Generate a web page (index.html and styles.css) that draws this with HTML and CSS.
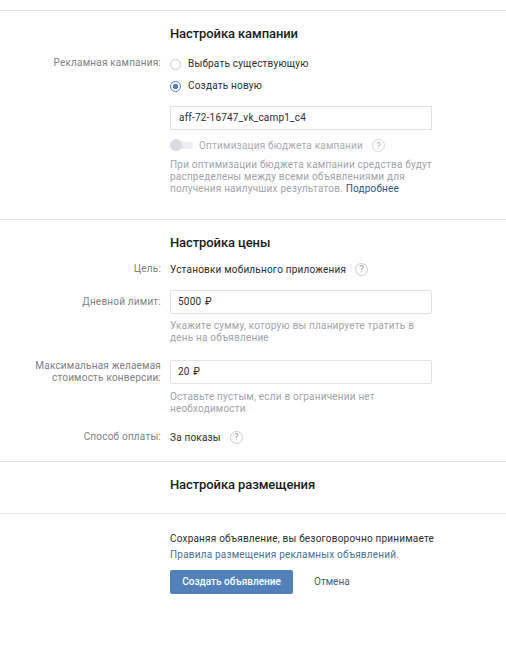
FILE: index.html
```html
<!DOCTYPE html>
<html lang="ru">
<head>
<meta charset="utf-8">
<title>Настройка кампании</title>
<link rel="stylesheet" href="styles.css">
</head>
<body>
<section class="section s-campaign">
  <h2 class="title">Настройка кампании</h2>
  <div class="row r-camp">
    <div class="label">Рекламная кампания:</div>
    <div class="field">
      <div class="radio r1"><span class="dot"></span><span>Выбрать существующую</span></div>
      <div class="radio r2"><span class="dot on"></span><span>Создать новую</span></div>
      <div class="input square">aff-72-16747_vk_camp1_c4</div>
      <div class="toggle-row">
        <span class="toggle"><span class="knob"></span></span>
        <span class="muted-strong">Оптимизация бюджета кампании</span>
        <span class="help faded">?</span>
      </div>
      <p class="hint">При оптимизации бюджета кампании средства будут распределены между всеми объявлениями для получения наилучших результатов. <a class="link">Подробнее</a></p>
    </div>
  </div>
</section>
<section class="section s-price">
  <h2 class="title">Настройка цены</h2>
  <div class="row r-goal">
    <div class="label">Цель:</div>
    <div class="field inline"><span class="value">Установки мобильного приложения</span><span class="help">?</span></div>
  </div>
  <div class="row r-limit">
    <div class="label l-input">Дневной лимит:</div>
    <div class="field">
      <div class="input money">5000 ₽</div>
      <p class="hint h-input">Укажите сумму, которую вы планируете тратить в день на объявление</p>
    </div>
  </div>
  <div class="row r-max">
    <div class="label">Максимальная желаемая стоимость конверсии:</div>
    <div class="field">
      <div class="input money">20 ₽</div>
      <p class="hint h-input h-max">Оставьте пустым, если в ограничении нет необходимости</p>
    </div>
  </div>
  <div class="row r-pay">
    <div class="label">Способ оплаты:</div>
    <div class="field inline"><span class="value">За показы</span><span class="help">?</span></div>
  </div>
</section>
<section class="section s-place">
  <h2 class="title">Настройка размещения</h2>
</section>
<section class="s-submit">
  <div class="submit-body">
    <p class="agree">Сохраняя объявление, вы безоговорочно принимаете</p>
    <p class="agree a2"><a class="link">Правила размещения рекламных объявлений</a>.</p>
    <div class="actions">
      <button class="btn" type="button">Создать объявление</button>
      <a class="cancel">Отмена</a>
    </div>
  </div>
</section>
</body>
</html>
```
FILE: styles.css
```css
html, body { margin: 0; padding: 0; background: #fff; }
body {
  height: 651px;
  overflow: hidden;
  font-family: Roboto, "Liberation Sans", sans-serif;
  font-size: 10px;
  letter-spacing: 0.2px;
  line-height: 12px;
  color: #2c2d2e;
}
.section { border-top: 1px solid #e3e5e8; }
.s-campaign { margin-top: 10px; height: 208px; }
.s-price { height: 241px; }
.s-place { height: 51px; }
.s-submit { border-top: 1px solid #e3e5e8; }
.title {
  margin: 0 0 0 170px;
  padding-top: 16px;
  font-size: 13px;
  font-weight: 500;
  line-height: 14px;
  letter-spacing: -0.1px;
  color: #1a1b1c;
}
.row { display: flex; gap: 9px; }
.label {
  width: 161px;
  flex: none;
  text-align: right;
  color: #7b7f85;
}
.field { width: 262px; flex: none; }
.inline { display: flex; align-items: center; gap: 9px; height: 12px; }
.value { padding-top: 2px; }
.r-camp { margin-top: 16px; }
.radio { display: flex; align-items: center; gap: 7px; height: 12px; }
.r1 { margin-top: 1px; }
.r2 { margin-top: 10px; }
.dot {
  box-sizing: border-box;
  width: 11px;
  height: 11px;
  border: 1px solid #c5c9cf;
  border-radius: 50%;
  flex: none;
}
.dot.on {
  border-color: #5181b8;
  background: radial-gradient(circle, #5181b8 0 2.5px, #fff 3px);
}
.input {
  box-sizing: border-box;
  height: 24px;
  padding: 5px 8px;
  border: 1px solid #dfe2e6;
  border-radius: 2px;
  background: #fff;
}
.money { padding-left: 7px; word-spacing: 1px; }
.square { margin-top: 14px; border-radius: 0; }
.toggle-row { display: flex; align-items: center; margin-top: 9px; height: 13px; color: #a7abb0; }
.toggle {
  position: relative;
  display: block;
  width: 23px;
  height: 7px;
  border-radius: 4px;
  background: #eceef1;
  margin-right: 6px;
}
.knob {
  position: absolute;
  left: 0;
  top: -3px;
  width: 12px;
  height: 12px;
  border-radius: 50%;
  background: #d9dce2;
}
.help {
  box-sizing: border-box;
  display: flex;
  align-items: center;
  justify-content: center;
  width: 13px;
  height: 13px;
  border: 1px solid #c8ccd1;
  border-radius: 50%;
  font-size: 9px;
  letter-spacing: 0;
  color: #8f9399;
  flex: none;
}
.help.faded { margin-left: 9px; border-color: #d5d8dc; color: #b0b4b9; }
.hint { margin: 7px 0 0; color: #a0a4a9; }
.link { color: #2a5885; text-decoration: none; }
.h-input { margin-top: 6px; }
.h-max { margin-top: 7px; }
.r-goal { margin-top: 13px; }
.r-limit { margin-top: 15px; }
.l-input { padding-top: 6px; }
.r-max { margin-top: 16px; }
.r-pay { margin-top: 16px; }
.submit-body { padding: 19px 0 0 170px; }
.agree { margin: 0; white-space: nowrap; }
.a2 { margin-top: 4px; color: #5a7a9a; }
.a2 .link { color: #4a6f94; }
.actions { display: flex; align-items: center; margin-top: 9px; }
.btn {
  width: 123px;
  height: 24px;
  border: 0;
  border-radius: 2px;
  background: #5181b8;
  color: #fff;
  font: 500 10px/12px Roboto, "Liberation Sans", sans-serif;
  padding: 0;
}
.cancel { margin-left: 21px; letter-spacing: 0; color: #4a5c70; }
```
